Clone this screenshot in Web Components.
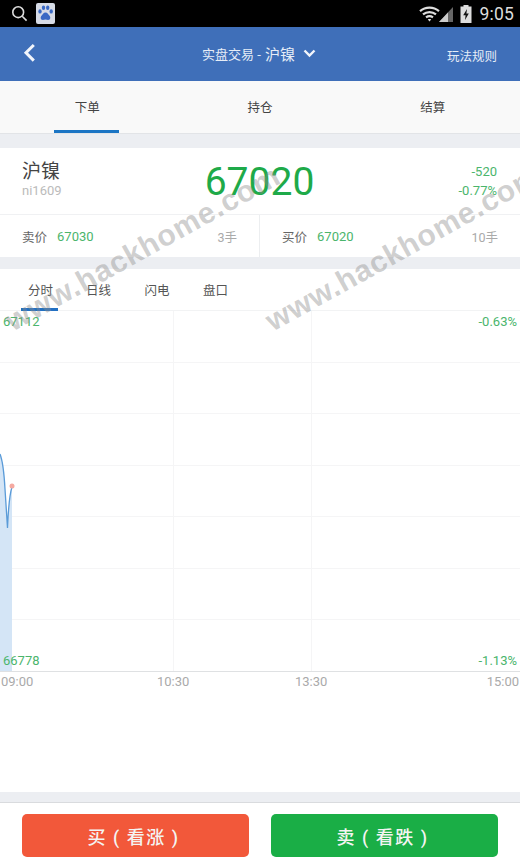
<!DOCTYPE html>
<html lang="zh">
<head>
<meta charset="utf-8">
<title>实盘交易</title>
<style>
html, body { margin: 0; padding: 0; background: #fff; }
body { width: 520px; height: 867px; overflow: hidden; font-family: Roboto, "Noto Sans CJK SC", sans-serif; }
</style>
</head>
<body>
<trade-app></trade-app>
<script>
const CJK = `Roboto, "Noto Sans CJK SC", sans-serif`

customElements.define('status-bar', class extends HTMLElement {
  constructor() {
    super()
    this.attachShadow({ mode: 'open' })
    this.shadowRoot.innerHTML = `
<style>
:host { display: flex; align-items: center; height: 27px; background: #000; color: #ddd; padding: 0 6px 0 11px; box-sizing: border-box; font: 17.5px ${CJK}; }
.left { display: flex; align-items: center; gap: 8px; flex: 1; }
.right { display: flex; align-items: center; }
.time { margin-left: 7px; letter-spacing: .2px; }
svg { display: block; }
</style>
<div class="left">
  <svg width="17" height="17" viewBox="0 0 17 17" fill="none" stroke="#ddd" stroke-width="1.6"><circle cx="7.2" cy="7.2" r="5.4"/><path d="M11.2 11.2 15.6 15.6"/></svg>
  <svg width="19" height="21" viewBox="0 0 19 21"><rect width="19" height="21" rx="2" fill="#d6dbe6"/><g fill="#3a69c4"><ellipse cx="4" cy="8.4" rx="1.7" ry="2.2"/><ellipse cx="7.5" cy="4.8" rx="1.7" ry="2.3"/><ellipse cx="11.7" cy="4.8" rx="1.7" ry="2.3"/><ellipse cx="15.2" cy="8.4" rx="1.7" ry="2.2"/><path d="M9.5 9.6c-2 0-2.6 1.8-3.8 2.9-1.4 1.2-1.6 4.3 1.2 4.5 1 0 1.600-.4 2.600-.4s1.600.4 2.600.4c2.800-.2 2.600-3.300 1.200-4.500-1.200-1.100-1.800-2.900-3.800-2.900z"/></g></svg>
</div>
<div class="right">
  <svg width="21" height="16" viewBox="0 0 21 16" fill="none" stroke="#ddd" stroke-width="2.2"><path d="M1 5.200C6.500.4 14.500.4 20 5.200"/><path d="M4 8.400c3.800-3.100 9.200-3.100 13 0"/><path d="M7 11.400c2.100-1.400 4.900-1.400 7 0"/><path d="M10.500 15.600 8.800 13.400c1-.6 2.400-.6 3.400 0z" fill="#ddd" stroke="none"/></svg>
  <svg width="14" height="16" viewBox="0 0 14 16" style="margin-left:-1px"><path d="M0 16 14 1V16z" fill="#666"/><path d="M0 16 9 6.400V16z" fill="#ccc"/></svg>
  <svg width="12" height="18" viewBox="0 0 12 18" style="margin-left:7px"><path d="M3.500 0h5v1.500H11.500V18H.5V1.500h3z" fill="#ddd"/><path d="M7 4 3.200 10.300H5.600L5 15 8.800 8.500H6.400z" fill="#111"/></svg>
  <span class="time">9:05</span>
</div>`
  }
})

customElements.define('top-header', class extends HTMLElement {
  constructor() {
    super()
    this.attachShadow({ mode: 'open' })
    this.shadowRoot.innerHTML = `
<style>
:host { display: grid; grid-template-columns: 1fr auto 1fr; align-items: center; height: 54px; background: #3f6fb9; color: #e6edf7; box-sizing: border-box; padding: 0 23px; font: 13px ${CJK}; }
.title { display: flex; align-items: center; gap: 8px; margin-left: -2px; margin-top: -1px; }
.title b { font-weight: 400; font-size: 15px; margin-left: -4px; }
.rule { justify-self: end; margin-top: 3px; font-size: 12.500px; }
svg { display: block; }
</style>
<svg width="13" height="20" viewBox="0 0 13 20" fill="none" stroke="#f2f5fb" stroke-width="3" style="margin-top:-3px"><path d="M10.800 2 3 9.800l7.800 7.800"/></svg>
<div class="title"><span>实盘交易 -</span><b>沪镍</b><svg width="13" height="9" viewBox="0 0 13 9" fill="none" stroke="#f2f5fb" stroke-width="2.400" style="margin-top:-1px"><path d="M1.500 1.500 6.500 6.500l5-5"/></svg></div>
<span class="rule">玩法规则</span>`
  }
})

customElements.define('tab-bar', class extends HTMLElement {
  constructor() {
    super()
    this.attachShadow({ mode: 'open' })
    this.shadowRoot.innerHTML = `
<style>
:host { display: grid; grid-template-columns: repeat(3, 1fr); height: 53px; padding: 0 1px; box-sizing: border-box; background: #f9f9f9; border-bottom: 1px solid #e2e4e7; font: 12.500px ${CJK}; color: #444; }
::slotted(*) { display: flex; align-items: center; justify-content: center; }
</style>
<slot></slot>`
  }
})

customElements.define('tab-item', class extends HTMLElement {
  constructor() {
    super()
    this.attachShadow({ mode: 'open' })
    this.shadowRoot.innerHTML = `
<style>
:host { position: relative; padding-bottom: 1px; }
:host([active])::after { content: ""; position: absolute; left: 50%; bottom: 0; width: 65px; height: 3px; margin-left: -33px; background: #1b75c4; }
</style>
<slot></slot>`
  }
})

customElements.define('gap-band', class extends HTMLElement {
  constructor() {
    super()
    this.attachShadow({ mode: 'open' })
    this.shadowRoot.innerHTML = `<style>:host { display: block; background: #eceef2; height: var(--h, 12px); }</style>`
  }
})

customElements.define('quote-panel', class extends HTMLElement {
  constructor() {
    super()
    this.attachShadow({ mode: 'open' })
    this.shadowRoot.innerHTML = `
<style>
:host { display: grid; grid-template-columns: 1fr auto 1fr; align-items: center; height: 67px; background: #fff; padding: 0 23px 0 22px; box-sizing: border-box; border-bottom: 1px solid #f0f1f3; font-family: ${CJK}; }
.left { padding-bottom: 2px; }
.name { font-size: 19px; line-height: 22px; color: #444; }
.code { font-size: 13px; line-height: 16px; color: #bbb; }
.price { font-size: 39px; color: #1eaa49; line-height: 1; margin-top: 2px; }
.chg { justify-self: end; text-align: right; color: #4bb56c; font-size: 13px; line-height: 19px; }
</style>
<div class="left"><div class="name">沪镍</div><div class="code">ni1609</div></div>
<div class="price">67020</div>
<div class="chg"><div>-520</div><div>-0.77%</div></div>`
  }
})

customElements.define('bid-cell', class extends HTMLElement {
  constructor() {
    super()
    this.attachShadow({ mode: 'open' })
    this.shadowRoot.innerHTML = `
<style>
:host { display: flex; align-items: center; padding: 0 22px; font: 12.500px ${CJK}; color: #666; box-sizing: border-box; }
.val { color: #4bb56c; margin-left: 10px; flex: 1; font-size: 13px; }
.qty { color: #aaa; font-size: 12.500px; }
</style>
<span class="lbl"></span><span class="val"></span><span class="qty"></span>`
    this.shadowRoot.querySelector('.lbl').textContent = this.getAttribute('label')
    this.shadowRoot.querySelector('.val').textContent = this.getAttribute('value')
    this.shadowRoot.querySelector('.qty').textContent = this.getAttribute('qty')
  }
})

customElements.define('bid-row', class extends HTMLElement {
  constructor() {
    super()
    this.attachShadow({ mode: 'open' })
    this.shadowRoot.innerHTML = `
<style>
:host { display: grid; grid-template-columns: 260px 260px; height: 42px; background: #fff; }
::slotted(:first-child) { border-right: 1px solid #eceef0; }
</style>
<slot></slot>`
  }
})

customElements.define('chart-tabs', class extends HTMLElement {
  constructor() {
    super()
    this.attachShadow({ mode: 'open' })
    this.shadowRoot.innerHTML = `
<style>
:host { display: flex; height: 42px; background: #fff; padding-left: 21px; box-sizing: border-box; border-bottom: 1px solid #f2f3f4; font: 12.500px ${CJK}; color: #555; }
span { position: relative; width: 58.500px; display: flex; align-items: center; padding: 0 0 1px 7px; box-sizing: border-box; }
span:first-of-type { width: 58px; }
span:first-of-type::after { content: ""; position: absolute; left: 0; bottom: -1px; width: 37px; height: 3px; background: #2270c2; }
</style>
<span>分时</span><span>日线</span><span>闪电</span><span>盘口</span>`
  }
})

customElements.define('time-chart', class extends HTMLElement {
  constructor() {
    super()
    this.attachShadow({ mode: 'open' })
    const rows = [51, 102, 154, 205, 257, 308].map(y => `<path d="M0 ${y + .5}H520"/>`).join('')
    this.shadowRoot.innerHTML = `
<style>
:host { display: block; position: relative; height: 360px; background: #fff; border-bottom: 1px solid #dfe1e3; font: 13px ${CJK}; color: #4bb56c; }
svg { display: block; }
span { position: absolute; }
.l { left: 3px; } .r { right: 3px; }
.t { top: 3px; } .b { bottom: 3px; }
</style>
<svg width="520" height="360" viewBox="0 0 520 360">
  <g stroke="#f5f5f6" fill="none">${rows}<path d="M173.500 0V360M311.500 0V360"/></g>
  <path d="M0 143C2 148 4 160 5 178 6 195 7 210 7.500 217 8 205 9 185 12 176V360H0Z" fill="#d4e5f6"/>
  <path d="M0 143C2 148 4 160 5 178 6 195 7 210 7.500 217 8 205 9 185 12 176" fill="none" stroke="#5a9bd8" stroke-width="1.300"/>
  <circle cx="12" cy="175" r="2.500" fill="#f5a9a0"/>
</svg>
<span class="l t">67112</span><span class="r t">-0.63%</span>
<span class="l b">66778</span><span class="r b">-1.13%</span>`
  }
})

customElements.define('time-axis', class extends HTMLElement {
  constructor() {
    super()
    this.attachShadow({ mode: 'open' })
    this.shadowRoot.innerHTML = `
<style>
:host { display: grid; grid-template-columns: 156px 138px 1fr 1fr; height: 120px; background: #fff; padding: 2px 1px 0; box-sizing: border-box; font: 13px/16px ${CJK}; color: #aaa; }
span:last-of-type { justify-self: end; }
</style>
<span>09:00</span><span>10:30</span><span>13:30</span><span>15:00</span>`
  }
})

customElements.define('order-button', class extends HTMLElement {
  constructor() {
    super()
    this.attachShadow({ mode: 'open' })
    this.shadowRoot.innerHTML = `
<style>
:host { display: flex; align-items: center; justify-content: center; height: 43px; padding-right: 4px; box-sizing: border-box; border-radius: 5px; color: #f4f4f2; font: 500 18px ${CJK}; letter-spacing: 1.500px; white-space: pre; background: var(--bg); }
</style>
<slot></slot>`
  }
})

customElements.define('order-bar', class extends HTMLElement {
  constructor() {
    super()
    this.attachShadow({ mode: 'open' })
    this.shadowRoot.innerHTML = `
<style>
:host { display: grid; grid-template-columns: 227px 227px; justify-content: space-between; height: 65px; padding: 11px 22px 10px; box-sizing: border-box; background: #fff; border-top: 1px solid #d9dbde; }
</style>
<slot></slot>`
  }
})

customElements.define('water-mark', class extends HTMLElement {
  constructor() {
    super()
    this.attachShadow({ mode: 'open' })
    this.shadowRoot.innerHTML = `
<style>
:host { position: absolute; left: var(--x); top: var(--y); transform: rotate(-29deg); transform-origin: 0 50%; font: 700 30px/1 "Liberation Sans", sans-serif; letter-spacing: .8px; color: rgba(140,140,140,.42); white-space: nowrap; }
</style>
<slot></slot>`
  }
})

customElements.define('trade-app', class extends HTMLElement {
  constructor() {
    super()
    this.attachShadow({ mode: 'open' })
    this.shadowRoot.innerHTML = `
<style>
:host { display: block; position: relative; width: 520px; height: 867px; overflow: hidden; }
</style>
<status-bar></status-bar>
<top-header></top-header>
<tab-bar><tab-item active>下单</tab-item><tab-item>持仓</tab-item><tab-item>结算</tab-item></tab-bar>
<gap-band style="--h:14px"></gap-band>
<quote-panel></quote-panel>
<bid-row>
  <bid-cell label="卖价" value="67030" qty="3手"></bid-cell>
  <bid-cell label="买价" value="67020" qty="10手"></bid-cell>
</bid-row>
<gap-band></gap-band>
<chart-tabs></chart-tabs>
<time-chart></time-chart>
<time-axis></time-axis>
<gap-band style="--h:10px"></gap-band>
<order-bar>
  <order-button style="--bg:#f2583a">买 ( 看涨 )</order-button>
  <order-button style="--bg:#1aae46">卖 ( 看跌 )</order-button>
</order-bar>
<water-mark style="--x:8px;--y:308px">www.hackhome.com</water-mark>
<water-mark style="--x:268px;--y:308px">www.hackhome.com</water-mark>`
  }
})
</script>
</body>
</html>
